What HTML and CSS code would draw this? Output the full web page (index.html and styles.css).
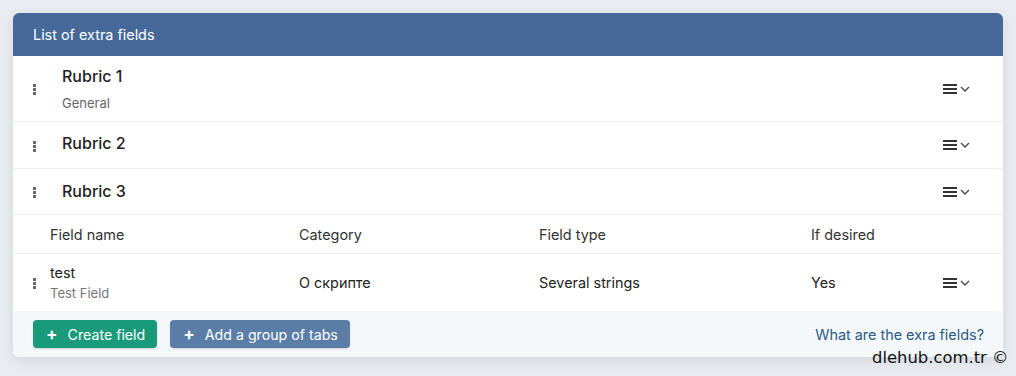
FILE: index.html
```html
<!DOCTYPE html>
<html lang="en">
<head>
  <meta charset="UTF-8">
  <title>List of extra fields</title>
  <link rel="stylesheet" href="styles.css">
</head>
<body>
  <div class="card">
    <div class="card-header">List of extra fields</div>

    <div class="rubric rubric-tall">
      <span class="handle"><i></i><i></i><i></i></span>
      <div class="rubric-info">
        <div class="rubric-title">Rubric 1</div>
        <div class="rubric-sub">General</div>
      </div>
      <span class="menu"><span class="bars"><i></i><i></i><i></i></span><svg width="10" height="6" viewBox="0 0 10 6"><path d="M1 1l4 4 4-4" fill="none" stroke="#444" stroke-width="1.3"/></svg></span>
    </div>

    <div class="rubric">
      <span class="handle"><i></i><i></i><i></i></span>
      <div class="rubric-info">
        <div class="rubric-title">Rubric 2</div>
      </div>
      <span class="menu"><span class="bars"><i></i><i></i><i></i></span><svg width="10" height="6" viewBox="0 0 10 6"><path d="M1 1l4 4 4-4" fill="none" stroke="#444" stroke-width="1.3"/></svg></span>
    </div>

    <div class="rubric rubric-last">
      <span class="handle"><i></i><i></i><i></i></span>
      <div class="rubric-info">
        <div class="rubric-title">Rubric 3</div>
      </div>
      <span class="menu"><span class="bars"><i></i><i></i><i></i></span><svg width="10" height="6" viewBox="0 0 10 6"><path d="M1 1l4 4 4-4" fill="none" stroke="#444" stroke-width="1.3"/></svg></span>
    </div>

    <div class="fields-head">
      <span></span>
      <span>Field name</span>
      <span>Category</span>
      <span>Field type</span>
      <span>If desired</span>
      <span></span>
    </div>

    <div class="field-row">
      <span class="handle"><i></i><i></i><i></i></span>
      <div>
        <div class="field-name">test</div>
        <div class="field-desc">Test Field</div>
      </div>
      <span>О скрипте</span>
      <span>Several strings</span>
      <span>Yes</span>
      <span class="menu"><span class="bars"><i></i><i></i><i></i></span><svg width="10" height="6" viewBox="0 0 10 6"><path d="M1 1l4 4 4-4" fill="none" stroke="#444" stroke-width="1.3"/></svg></span>
    </div>

    <div class="card-footer">
      <button class="btn btn-green"><span class="plus">+</span> Create field</button>
      <button class="btn btn-blue"><span class="plus">+</span> Add a group of tabs</button>
      <a class="help-link" href="#">What are the exra fields?</a>
    </div>
  </div>

  <div class="watermark">dlehub.com.tr ©</div>
</body>
</html>
```

FILE: styles.css
```css
body {
  margin: 0;
  padding: 13px;
  background: #e9edf1;
  font-family: Inter, 'Noto Sans', sans-serif;
  font-size: 14.4px;
  color: #222;
  height: 350px;
  overflow: hidden;
}

.card {
  width: 990px;
  background: #fff;
  border-radius: 6px;
  overflow: hidden;
  box-shadow: 0 4px 14px rgba(40, 60, 90, 0.12);
}

.card-header {
  height: 43px;
  line-height: 43px;
  padding: 0 20px;
  background: #46699a;
  color: #fff;
}

.rubric {
  display: flex;
  align-items: center;
  height: 46px;
  padding: 0 33px 0 20px;
  border-bottom: 1px solid #eaedf0;
}

.rubric-tall {
  height: 65px;
}

.rubric-last {
  height: 45px;
}

.rubric-info {
  flex: 1;
  padding-bottom: 4px;
}

.rubric-tall .rubric-info {
  padding-bottom: 0;
}

.rubric-last .rubric-info {
  padding-bottom: 2px;
}

.rubric-title {
  font-size: 16px;
  font-weight: 500;
  color: #222;
}

.rubric-sub {
  margin-top: 9px;
  font-size: 13px;
  color: #666;
}

.handle {
  display: flex;
  flex-direction: column;
  gap: 1px;
  width: 29px;
  margin-top: 2px;
}

.handle i {
  display: block;
  width: 3px;
  height: 3px;
  background: #6b6b6b;
}

.menu {
  display: flex;
  align-items: center;
  gap: 3px;
}

.bars {
  display: flex;
  flex-direction: column;
  gap: 2px;
}

.bars i {
  display: block;
  width: 14px;
  height: 2px;
  background: #333;
}

.fields-head,
.field-row {
  display: grid;
  grid-template-columns: 17px 249px 240px 272px 1fr auto;
  align-items: center;
  padding: 0 33px 0 20px;
}

.fields-head {
  height: 38px;
  color: #333;
  border-bottom: 1px solid #eaedf0;
}

.field-row {
  height: 57px;
}

.field-row .handle {
  width: auto;
}

.field-name {
  color: #222;
}

.field-desc {
  margin-top: 4px;
  font-size: 13px;
  color: #777;
}

.card-footer {
  display: flex;
  align-items: center;
  gap: 13px;
  height: 46px;
  padding: 0 19px 0 20px;
  background: #f5f8fa;
}

.btn {
  height: 28px;
  padding: 0 12px 0 13px;
  border: none;
  border-radius: 4px;
  font-family: inherit;
  font-size: 14.2px;
  color: #fff;
  cursor: pointer;
  box-shadow: 0 1px 2px rgba(0, 0, 0, 0.15);
}

.plus {
  font-weight: 700;
  font-size: 17px;
  margin-right: 6px;
}

.btn-green {
  background: #189a7b;
}

.btn-blue {
  background: #5a7ea7;
}

.help-link {
  margin-left: auto;
  color: #2a5b88;
  text-decoration: none;
}

.watermark {
  position: absolute;
  left: 872px;
  top: 348px;
  font-family: 'DejaVu Sans', sans-serif;
  font-size: 16.4px;
  color: #111;
}
```
